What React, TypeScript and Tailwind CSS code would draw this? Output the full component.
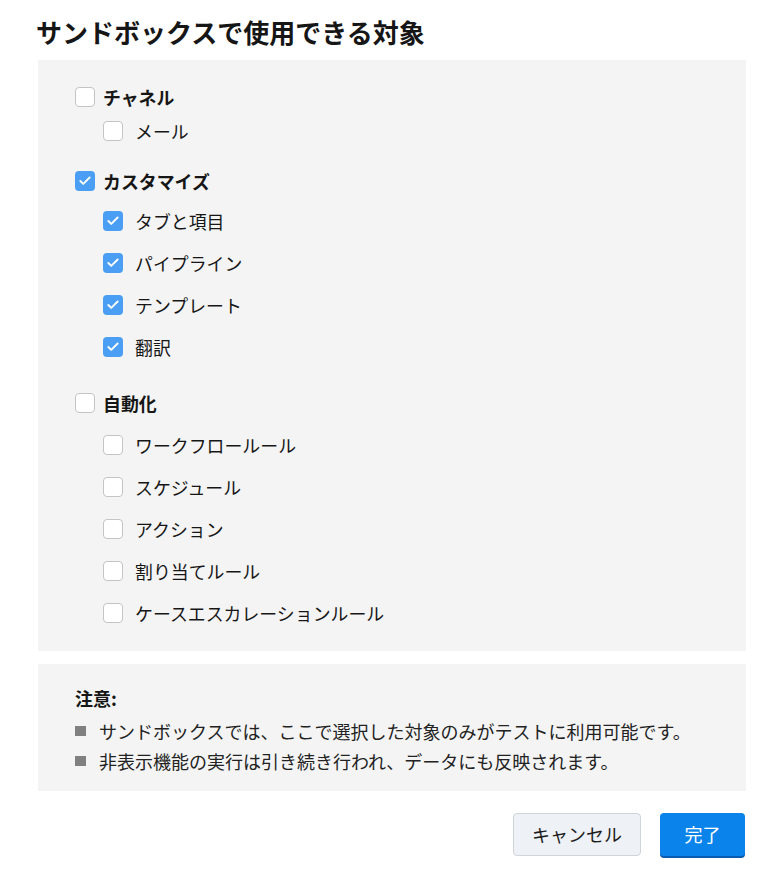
import { Check } from "lucide-react";

type Item = { label: string; checked: boolean };
type Group = { label: string; checked: boolean; mt: string; childMt: string; items: Item[] };

const groups: Group[] = [
  {
    label: "チャネル",
    checked: false,
    mt: "mt-0",
    childMt: "mt-0",
    items: [{ label: "メール", checked: false }],
  },
  {
    label: "カスタマイズ",
    checked: true,
    mt: "mt-4",
    childMt: "mt-[6px]",
    items: [
      { label: "タブと項目", checked: true },
      { label: "パイプライン", checked: true },
      { label: "テンプレート", checked: true },
      { label: "翻訳", checked: true },
    ],
  },
  {
    label: "自動化",
    checked: false,
    mt: "mt-[22px]",
    childMt: "mt-2",
    items: [
      { label: "ワークフロールール", checked: false },
      { label: "スケジュール", checked: false },
      { label: "アクション", checked: false },
      { label: "割り当てルール", checked: false },
      { label: "ケースエスカレーションルール", checked: false },
    ],
  },
];

const notes = [
  "サンドボックスでは、ここで選択した対象のみがテストに利用可能です。",
  "非表示機能の実行は引き続き行われ、データにも反映されます。",
];

function Box({ checked }: { checked: boolean }) {
  if (checked) {
    return (
      <span className="flex h-5 w-5 shrink-0 items-center justify-center rounded-[4px] bg-[#4a9ef3]">
        <Check size={14} strokeWidth={3.2} className="text-white" />
      </span>
    );
  }
  return <span className="h-5 w-5 shrink-0 rounded-[4px] border border-[#c4c4c4] bg-white" />;
}

export default function App() {
  return (
    <div
      className="h-[874px] w-[780px] bg-white pt-[15px] text-[#161616]"
      style={{ fontFamily: '"Noto Sans CJK JP", "Noto Sans", sans-serif' }}
    >
      <h1 className="ml-[36px] text-[26px] font-bold leading-[34px]">
        サンドボックスで使用できる対象
      </h1>

      {/* options */}
      <div className="ml-[38px] mr-[34px] mt-[11px] bg-[#f4f4f4] pb-[21px] pl-[37px] pt-5">
        {groups.map((g) => (
          <div key={g.label} className={g.mt}>
            <label className="flex h-[34px] items-center gap-2">
              <Box checked={g.checked} />
              <span className="text-[17.9px] font-bold">{g.label}</span>
            </label>
            <div className={`${g.childMt} space-y-2 pl-[28px]`}>
              {g.items.map((it) => (
                <label key={it.label} className="flex h-[34px] items-center gap-3">
                  <Box checked={it.checked} />
                  <span className="text-[17.9px]">{it.label}</span>
                </label>
              ))}
            </div>
          </div>
        ))}
      </div>

      {/* notes */}
      <div className="ml-[38px] mr-[34px] mt-[13px] bg-[#f4f4f4] pb-[15px] pl-[37px] pt-[21px]">
        <div className="flex h-[26px] items-center text-[18px] font-bold">注意:</div>
        <ul className="mt-[5px]">
          {notes.map((n) => (
            <li key={n} className="flex h-[30px] items-center gap-[13px] text-[18px] text-[#222]">
              <span className="h-[10px] w-[11px] shrink-0 bg-[#808080]" />
              {n}
            </li>
          ))}
        </ul>
      </div>

      <div className="mr-[35px] mt-[22px] flex justify-end gap-[19px]">
        <button className="h-[43px] w-[128px] rounded-[4px] border border-[#cfd4db] bg-[#eef1f5] text-[18px] text-[#1c1c1c]">
          キャンセル
        </button>
        <button className="h-[43px] w-[85px] rounded-[4px] bg-[#0a84ea] text-[18px] text-white shadow-[0_2px_0_#0a5bb0]">
          完了
        </button>
      </div>
    </div>
  );
}
